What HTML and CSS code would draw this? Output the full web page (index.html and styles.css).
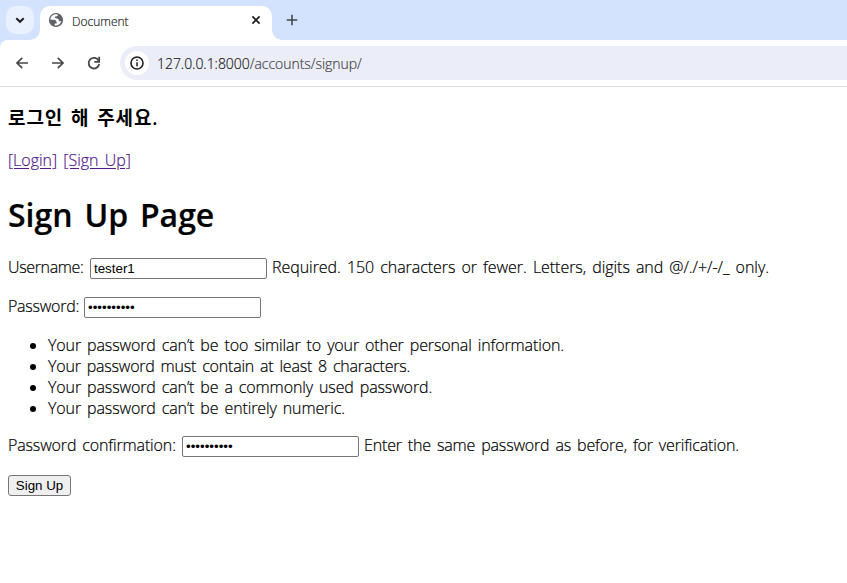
FILE: index.html
```html
<!DOCTYPE html>
<html lang="ko">
<head>
<meta charset="utf-8">
<title>Document</title>
<link rel="stylesheet" href="styles.css">
</head>
<body>
<header class="browser">
  <div class="tabstrip">
    <div class="tab-search"><svg width="28" height="28" viewBox="0 0 28 28"><path d="M10.3 12.2 14 15.8l3.7-3.6" fill="none" stroke="#1f1f1f" stroke-width="2"/></svg></div>
    <div class="tab">
      <svg class="globe" width="16" height="16" viewBox="0 0 16 16"><circle cx="8" cy="8" r="7.1" fill="#5f6368"/><path d="M9.4 2.5C6 1.6 2.6 4 2.3 7.4c1.3.5 2.6.3 3.7.3 1.5 0 2.1.8 2.2 1.7.1.7.7.7.7 1.3s-.8.9-1.8.9c-.6.4-.5 1.2-.4 1.9 3.2.5 6-1.4 6.7-4.4-1 .4-2 .3-2.4-.4-.5-.8-.3-1.5-1-1.9-.9-.5-2.2 0-2.8-.7-.5-.8-.1-1.6.7-1.8.9-.2 1.6.1 1.9-.5.2-.4-.3-.8-.4-1.3z" fill="#fff"/></svg>
      <span class="tab-title">Document</span>
      <svg class="close" width="16" height="16" viewBox="0 0 16 16"><path d="m4.4 4.4 7.2 7.2m0-7.2-7.2 7.2" stroke="#1f1f1f" stroke-width="1.7"/></svg>
    </div>
    <svg class="plus" width="16" height="16" viewBox="0 0 16 16"><path d="M8 2.7v10.6M2.7 8h10.6" stroke="#474747" stroke-width="1.6"/></svg>
  </div>
  <div class="toolbar">
    <svg class="nav" width="16" height="16" viewBox="0 0 16 16"><path d="M14 8H3m5.2-5.2L3 8l5.2 5.2" fill="none" stroke="#474747" stroke-width="1.7"/></svg>
    <svg class="nav" width="16" height="16" viewBox="0 0 16 16"><path d="M2 8h11M7.8 2.8 13 8l-5.2 5.2" fill="none" stroke="#474747" stroke-width="1.7"/></svg>
    <svg class="nav" width="16" height="16" viewBox="0 0 16 16"><path d="M12.7 5.8A5.3 5.3 0 1 0 13.2 9" fill="none" stroke="#474747" stroke-width="1.8"/><path d="M13.2 1.8v5H8.3" fill="none" stroke="#474747" stroke-width="1.8"/></svg>
    <div class="address">
      <div class="info"><svg width="16" height="16" viewBox="0 0 16 16"><circle cx="8" cy="8" r="6" fill="none" stroke="#1f1f1f" stroke-width="1.6"/><path d="M8 7.2v4M8 4.6v1.5" stroke="#1f1f1f" stroke-width="1.5"/></svg></div>
      <span class="url">127.0.0.1:8000<span class="path">/accounts/signup/</span></span>
    </div>
  </div>
</header>
<main>
  <h3>로그인 해 주세요.</h3>
  <nav class="links"><a href="#">[Login]</a> <a href="#">[Sign Up]</a></nav>
  <h1>Sign Up Page</h1>
  <form>
    <p><label class="l-user" for="u">Username:</label><input id="u" type="text" value="tester1"><span class="h-user">Required. 150 characters or fewer. Letters, digits and @/./+/-/_ only.</span></p>
    <p class="pw"><label class="l-pass" for="p">Password:</label><input id="p" type="password" value="abcdefghij"></p>
    <ul>
      <li>Your password can’t be too similar to your other personal information.</li>
      <li class="tight">Your password must contain at least 8 characters.</li>
      <li>Your password can’t be a commonly used password.</li>
      <li>Your password can’t be entirely numeric.</li>
    </ul>
    <p><label class="l-conf" for="c">Password confirmation:</label><input id="c" type="password" value="abcdefghij"><span class="h-conf">Enter the same password as before, for verification.</span></p>
    <button type="button">Sign Up</button>
  </form>
</main>
</body>
</html>
```
FILE: styles.css
```css
* { box-sizing: border-box; }
body { margin: 0; background: #fff; color: #000; font: 300 16px/21px "Open Sans", "Noto Sans CJK KR", sans-serif; letter-spacing: -.14px; word-spacing: 2px; -webkit-text-stroke: .2px currentColor; overflow: hidden; }
svg { display: block; flex: none; }
.browser { height: 87px; border-bottom: 1px solid #dfdfdf; background: #d3e3fd; }
.tabstrip { display: flex; height: 40px; padding: 6px 0 0 6px; }
.tab-search { width: 28px; height: 28px; border-radius: 10px; background: #e9f0fe; }
.tab { position: relative; display: flex; width: 232px; height: 34px; margin-left: 6px; padding: 6px 8px; border-radius: 10px 10px 0 0; background: #fff; }
.tab::before, .tab::after { content: ""; position: absolute; bottom: 0; width: 10px; height: 10px; }
.tab::before { left: -10px; background: radial-gradient(circle at 0 0, transparent 9.5px, #fff 10px); }
.tab::after { right: -10px; background: radial-gradient(circle at 100% 0, transparent 9.5px, #fff 10px); }
.tab-title { margin-left: 8px; font-size: 12px; line-height: 19px; color: #1f1f1f; letter-spacing: 0; }
.close { margin-left: auto; }
.plus { margin: 6px 0 0 12px; }
.toolbar { display: flex; height: 46px; padding: 6px 0 0 14px; border-radius: 8px 0 0 0; background: #fff; }
.nav { margin: 9px 20px 0 0; }
.address { display: flex; align-items: center; flex: 1; height: 34px; margin-left: -2px; padding-left: 5px; border-radius: 17px 0 0 17px; background: #ebeef8; }
.info { display: grid; place-items: center; width: 24px; height: 24px; border-radius: 50%; background: #fff; }
.url { margin-left: 8px; font-size: 14px; color: #1f1f1f; letter-spacing: -.04px; white-space: nowrap; }
.path { color: #474747; }
main { padding: 18px 8px 0; }
h3 { height: 26px; margin: 0 0 19px; font: 600 19px/26px "Open Sans", "Noto Sans CJK KR", sans-serif; letter-spacing: .9px; word-spacing: 2px; -webkit-text-stroke: 0; }
.links { height: 21px; letter-spacing: 0; }
a { color: #551a8b; text-decoration: underline; text-underline-offset: 2px; }
h1 { height: 43px; margin: 22px 0 22px; font-size: 32px; line-height: 43px; font-weight: 600; letter-spacing: 0; word-spacing: 3.5px; }
p { display: flex; align-items: center; height: 21px; margin: 0; line-height: 19px; white-space: nowrap; }
p label, p span { height: 21px; }
.pw { margin: 18px 0 17px; }
.l-user { width: 77px; letter-spacing: -.35px; }
.l-pass { width: 71px; letter-spacing: -.25px; }
.l-conf { width: 169px; }
.h-user { letter-spacing: -.05px; }
.h-conf { letter-spacing: -.16px; }
input { flex: none; width: 177px; height: 21px; margin: 0 5px; padding: 1px 3px; border: 1px solid #767676; border-radius: 2px; background: #fff; color: #000; font: 13.333px "Liberation Sans", sans-serif; -webkit-text-stroke: 0; }
ul { margin: 0 0 17px; padding-left: 40px; }
li { height: 21px; white-space: nowrap; letter-spacing: -.12px; }
.tight { letter-spacing: -.2px; }
button { display: block; width: 63px; height: 21px; margin: 18px 0 0; padding: 0; border: 1px solid #767676; border-radius: 3px; background: #efefef; color: #000; font: 13.333px "Liberation Sans", sans-serif; -webkit-text-stroke: 0; }
```
